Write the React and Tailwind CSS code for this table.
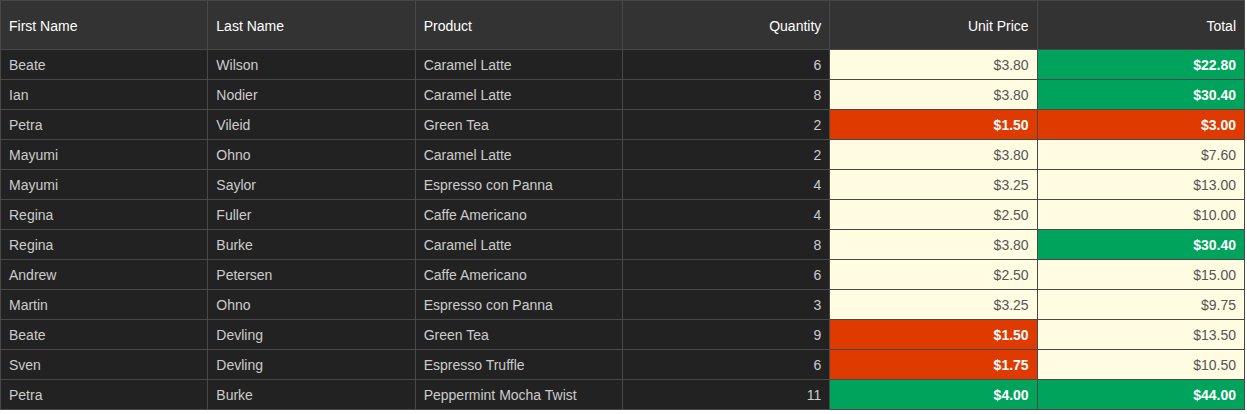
const rows = [
  ['Beate', 'Wilson', 'Caramel Latte', 6, 3.8],
  ['Ian', 'Nodier', 'Caramel Latte', 8, 3.8],
  ['Petra', 'Vileid', 'Green Tea', 2, 1.5],
  ['Mayumi', 'Ohno', 'Caramel Latte', 2, 3.8],
  ['Mayumi', 'Saylor', 'Espresso con Panna', 4, 3.25],
  ['Regina', 'Fuller', 'Caffe Americano', 4, 2.5],
  ['Regina', 'Burke', 'Caramel Latte', 8, 3.8],
  ['Andrew', 'Petersen', 'Caffe Americano', 6, 2.5],
  ['Martin', 'Ohno', 'Espresso con Panna', 3, 3.25],
  ['Beate', 'Devling', 'Green Tea', 9, 1.5],
  ['Sven', 'Devling', 'Espresso Truffle', 6, 1.75],
  ['Petra', 'Burke', 'Peppermint Mocha Twist', 11, 4.0],
]

// price < 2 is flagged red, >= 4 green; totals < 5 red, >= 20 green
function priceCls(v) {
  if (v < 2) return 'bg-[#df3a00] text-white font-bold'
  if (v >= 4) return 'bg-[#00a35b] text-white font-bold'
  return 'bg-[#fffce2] text-[#555]'
}

function totalCls(v) {
  if (v < 5) return 'bg-[#df3a00] text-white font-bold'
  if (v >= 20) return 'bg-[#00a35b] text-white font-bold'
  return 'bg-[#fffce2] text-[#555]'
}

const money = (v) => '$' + v.toFixed(2)

export default function App() {
  const th = 'h-[49px] pt-0.5 px-2 border border-[#484848] font-normal text-white'
  const td = 'h-[30px] px-2 pt-0.5 border border-[#484848]'

  return (
    <div className="bg-white w-[1247px] h-[414px]" style={{ fontFamily: '"Liberation Sans", Arial, sans-serif' }}>
      <table className="w-[1245px] table-fixed border-collapse text-[14px]">
        <thead>
          <tr className="bg-[#333333]">
            <th className={`${th} text-left`}>First Name</th>
            <th className={`${th} text-left`}>Last Name</th>
            <th className={`${th} text-left`}>Product</th>
            <th className={`${th} text-right`}>Quantity</th>
            <th className={`${th} text-right`}>Unit Price</th>
            <th className={`${th} text-right`}>Total</th>
          </tr>
        </thead>
        <tbody>
          {rows.map(([first, last, product, qty, price], i) => {
            const total = qty * price
            return (
              <tr key={i} className="bg-[#222222] text-[#cccccc]">
                <td className={td}>{first}</td>
                <td className={td}>{last}</td>
                <td className={td}>{product}</td>
                <td className={`${td} text-right`}>{qty}</td>
                <td className={`${td} text-right ${priceCls(price)}`}>{money(price)}</td>
                <td className={`${td} text-right ${totalCls(total)}`}>{money(total)}</td>
              </tr>
            )
          })}
        </tbody>
      </table>
    </div>
  )
}
